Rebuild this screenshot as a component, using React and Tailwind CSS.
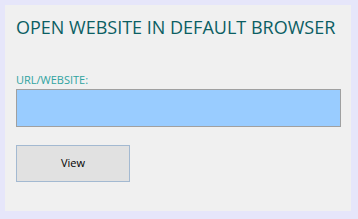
export default function App() {
  return (
    <div className="w-[358px] h-[219px] bg-[#e6e6fa] pl-[5px] pt-[5px] pr-[7px] pb-[8px]" style={{ fontFamily: '"Open Sans", "Noto Sans", sans-serif' }}>
      <div className="w-[346px] h-[206px] bg-[#f0f0f0] flex flex-col pl-[11px]">
        <div className="mt-[10px] h-[25px] text-[18px] leading-[25px] text-[#0b5e63] whitespace-nowrap">OPEN WEBSITE IN DEFAULT BROWSER</div>
        <div className="mt-[32px] h-[15px] text-[11px] leading-[15px] text-[#2fa3a0]">URL/WEBSITE:</div>
        <div className="mt-[2px] w-[325px] h-[38px] bg-[#99ccff] border border-[#a0a0a0]"></div>
        <button className="mt-[18px] w-[114px] h-[37px] bg-[#e1e1e1] border border-[#a3b9d1] text-[11px] text-black flex items-center justify-center">View</button>
      </div>
    </div>
  );
}
